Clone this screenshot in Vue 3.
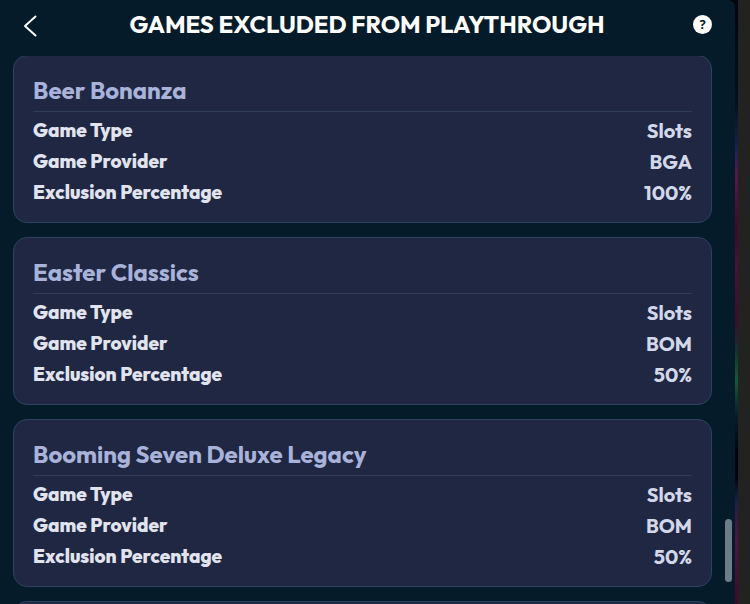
<template>
  <div class="screen">
    <main class="panel">
      <header class="header">
        <button class="back" type="button" aria-label="Back">
          <svg viewBox="0 0 14 22" width="14" height="22" aria-hidden="true">
            <path d="M12.5 1.5 L2 11 L12.5 20.5" />
          </svg>
        </button>
        <h1 class="heading">GAMES EXCLUDED FROM PLAYTHROUGH</h1>
        <button class="help" type="button" aria-label="Help">?</button>
      </header>

      <div class="list">
        <section v-for="game in games" :key="game.name" class="card">
          <h2 class="name">{{ game.name }}</h2>
          <dl class="details">
            <div v-for="field in fields" :key="field.key" class="row">
              <dt>{{ field.label }}</dt>
              <dd>{{ game[field.key] }}</dd>
            </div>
          </dl>
        </section>
        <section class="card card-next"></section>
      </div>

      <div class="thumb"></div>
    </main>
    <div class="glow"></div>
    <div class="edge"></div>
  </div>
</template>

<script setup>
const fields = [
  { key: 'type', label: 'Game Type' },
  { key: 'provider', label: 'Game Provider' },
  { key: 'exclusion', label: 'Exclusion Percentage' }
];

const games = [
  { name: 'Beer Bonanza', type: 'Slots', provider: 'BGA', exclusion: '100%' },
  { name: 'Easter Classics', type: 'Slots', provider: 'BOM', exclusion: '50%' },
  { name: 'Booming Seven Deluxe Legacy', type: 'Slots', provider: 'BOM', exclusion: '50%' }
];
</script>

<style>
body {
  margin: 0;
  background: #061b29;
}
</style>

<style scoped>
.screen {
  display: grid;
  grid-template-columns: 1fr 3px 12px;
  height: 100vh;
  overflow: hidden;
  background: #02060f;
  font-family: Outfit, Lato, sans-serif;
  font-weight: 700;
}

.panel {
  position: relative;
  display: flex;
  flex-direction: column;
  min-width: 0;
  min-height: 0;
  overflow: hidden;
  background: #061b29;
  border-top-right-radius: 8px;
}

.header {
  z-index: 1;
  display: grid;
  grid-template-columns: 24px 1fr 24px;
  align-items: center;
  flex: none;
  box-sizing: border-box;
  height: 56px;
  padding: 0 20px 8px 19px;
  background: #061b29;
}

.back,
.help {
  padding: 0;
  border: 0;
  cursor: pointer;
}

.back {
  display: flex;
  align-items: center;
  height: 28px;
  padding: 4px 0 0 4px;
  background: none;
}

.back svg {
  fill: none;
  stroke: #ffffff;
  stroke-width: 2;
  stroke-linecap: round;
  stroke-linejoin: round;
}

.heading {
  margin: 0;
  color: #ffffff;
  font-size: 24px;
  line-height: 32px;
  font-weight: 700;
  text-align: center;
  white-space: nowrap;
}

.help {
  justify-self: end;
  width: 19px;
  height: 19px;
  margin-right: 3px;
  border-radius: 50%;
  background: #ffffff;
  color: #061b29;
  font: 700 13px/19px "Noto Sans", sans-serif;
  text-align: center;
}

.list {
  display: flex;
  flex-direction: column;
  gap: 14px;
  min-height: 0;
  margin-top: -1px;
  padding: 0 23px 0 13px;
  overflow: hidden;
}

.card {
  flex: none;
  padding: 18px 19px 14px;
  border: 1px solid #2c4360;
  border-radius: 14px;
  background: #1f2743;
}

.card-next {
  height: 134px;
}

.name {
  margin: 0;
  padding-bottom: 5px;
  border-bottom: 1px solid #303e59;
  color: #a9b2d8;
  font-size: 24px;
  line-height: 32px;
  font-weight: 700;
}

.details {
  margin: 0;
  padding-top: 3px;
}

.row {
  display: flex;
  justify-content: space-between;
  font-size: 20px;
  line-height: 31px;
}

.row dt {
  color: #e1e4ef;
  font-size: 19px;
  font-weight: 800;
}

.row dd {
  margin: 0;
  color: #d3d7ea;
}

/* scroll handle floating over the panel's right gutter */
.thumb {
  position: absolute;
  right: 3px;
  bottom: 22px;
  width: 7px;
  height: 63px;
  border-radius: 4px;
  background: #6d7c89;
}

.glow {
  background: linear-gradient(
    #02060f 0%,
    #04101c 17%,
    #1c2350 25%,
    #56174f 29%,
    #3d0a26 38%,
    #48123c 44%,
    #3c0c28 53%,
    #12312f 58%,
    #17563c 63%,
    #061b29 69%,
    #01050d 75%,
    #01050d 79%,
    #1c2048 83%,
    #4d1646 89%,
    #3d0a26 100%
  );
}

.edge {
  background: #222221;
}
</style>
